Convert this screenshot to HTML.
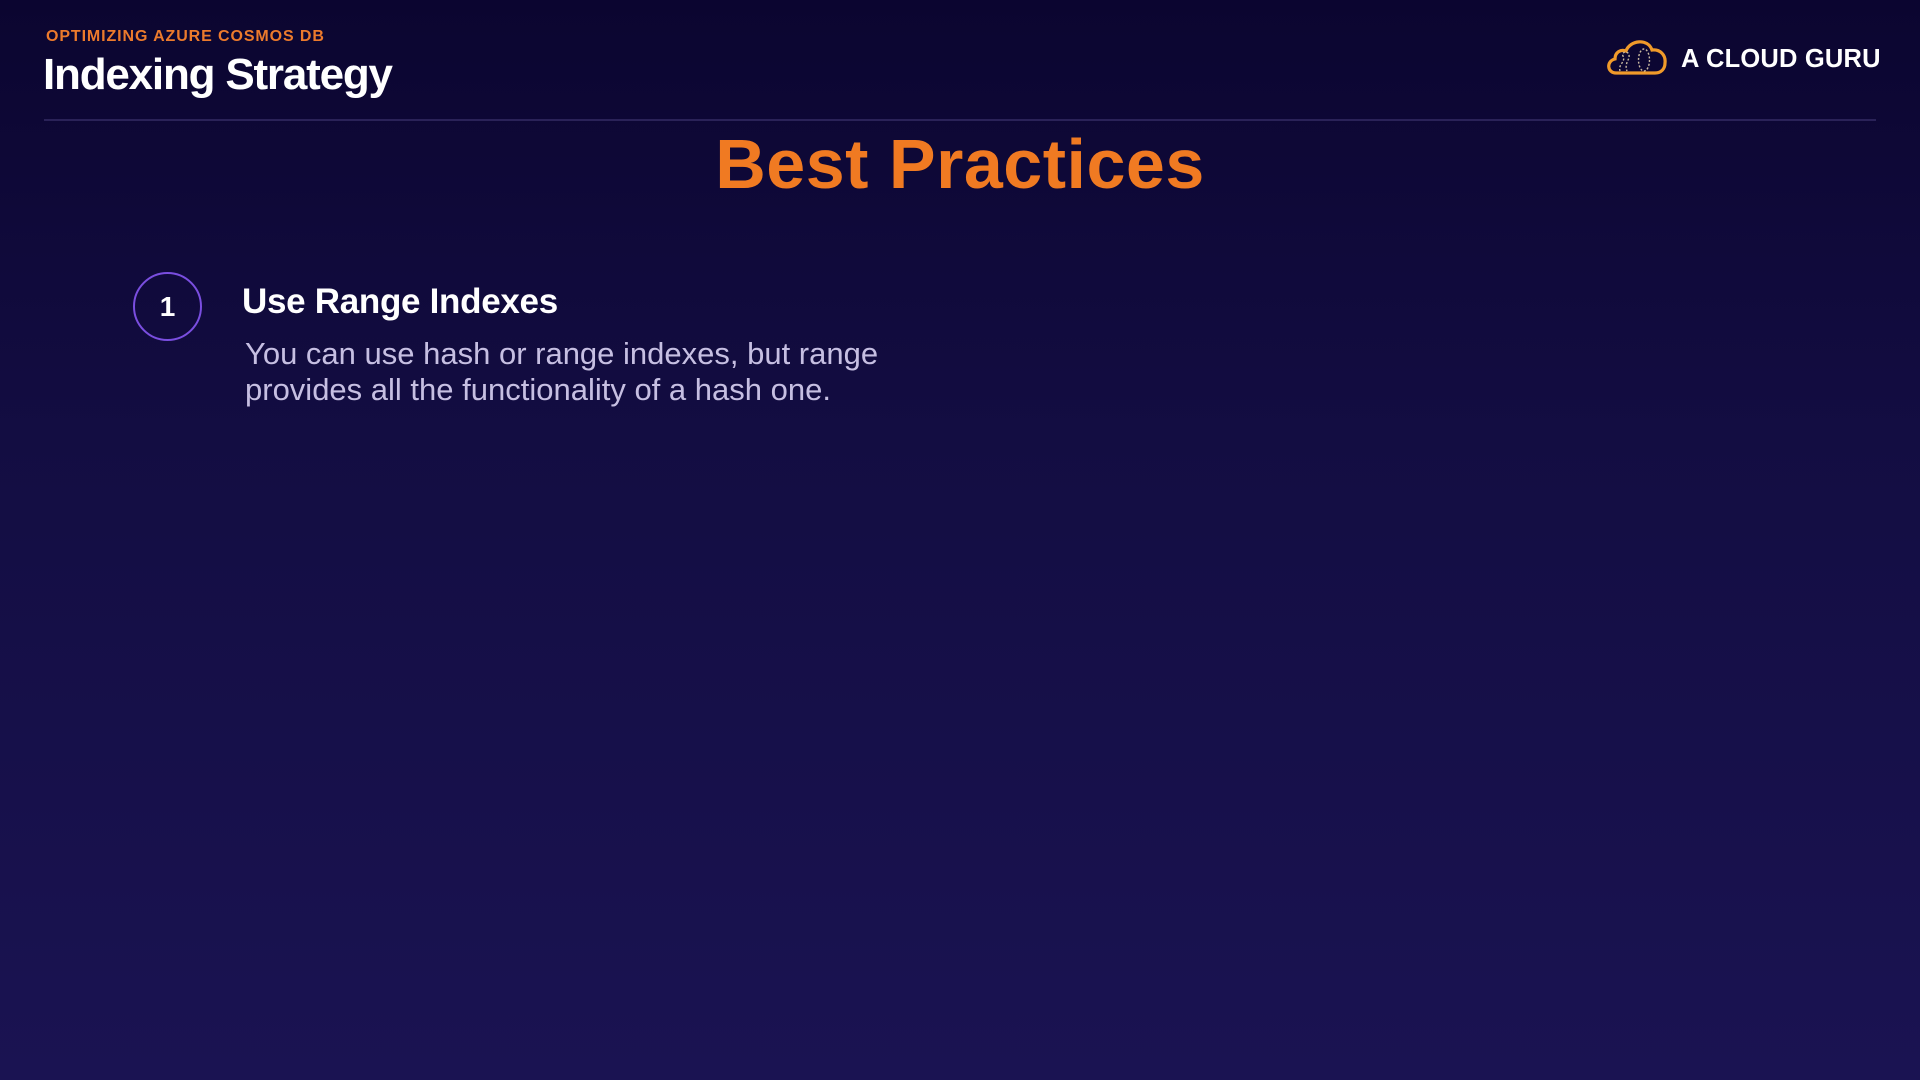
<!DOCTYPE html>
<html><head><meta charset="utf-8"><style>
html,body{margin:0;padding:0;}
body{width:1920px;height:1080px;overflow:hidden;position:relative;
background:linear-gradient(180deg,#0b0530 0%,#130d42 40%,#1a1352 100%);
font-family:"Liberation Sans",sans-serif;}
.sub{position:absolute;left:46px;top:28px;font-size:16px;font-weight:bold;color:#ec7a2c;letter-spacing:0.9px;}
.title{position:absolute;left:43px;top:50px;font-size:44px;font-weight:bold;color:#fff;letter-spacing:-1.2px;}
.line{position:absolute;left:44px;top:119px;width:1832px;height:2px;background:#2a2258;}
.bp{position:absolute;left:0;width:1920px;text-align:center;top:124px;font-size:70px;font-weight:bold;color:#f07a22;letter-spacing:0.5px;}
.circ{position:absolute;left:133px;top:272px;width:69px;height:69px;border:2px solid #7a4ee0;border-radius:50%;box-sizing:border-box;color:#fff;font-weight:bold;font-size:28px;text-align:center;line-height:65px;}
.h{position:absolute;left:242px;top:282px;font-size:35px;font-weight:bold;color:#fff;letter-spacing:-0.3px;}
.p{position:absolute;left:245px;top:336px;font-size:31px;line-height:36px;color:#c6bfe2;}
.logo{position:absolute;left:1681px;top:45px;font-size:25.5px;font-weight:bold;color:#fff;letter-spacing:0.2px;}
svg{position:absolute;left:1604px;top:36px;}
</style></head><body>
<div class="sub">OPTIMIZING AZURE COSMOS DB</div>
<div class="title">Indexing Strategy</div>
<div class="line"></div>
<div class="bp">Best Practices</div>
<div class="circ">1</div>
<div class="h">Use Range Indexes</div>
<div class="p">You can use hash or range indexes, but range<br>provides all the functionality of a hash one.</div>
<svg width="64" height="42" viewBox="0 0 64 42">
<path d="M12 37 C3 37 2 25 11 23 C11 16 17 13 22 15 C26 4 44 2 48 14 C56 13 62 19 61 27 C61 33 57 37 51 37 Z" fill="none" stroke="#f09a2a" stroke-width="3.2"/>
<path d="M16 35 C14 28 22 26 19 20 C17 16 24 14 25 19 C26 24 20 27 23 35" fill="none" stroke="#c9b9a0" stroke-width="1.4" stroke-dasharray="2 1.8"/>
<ellipse cx="40" cy="24" rx="5.5" ry="11" fill="none" stroke="#c9b9a0" stroke-width="1.4" stroke-dasharray="2 1.8"/>
</svg>
<div class="logo">A CLOUD GURU</div>
</body></html>
